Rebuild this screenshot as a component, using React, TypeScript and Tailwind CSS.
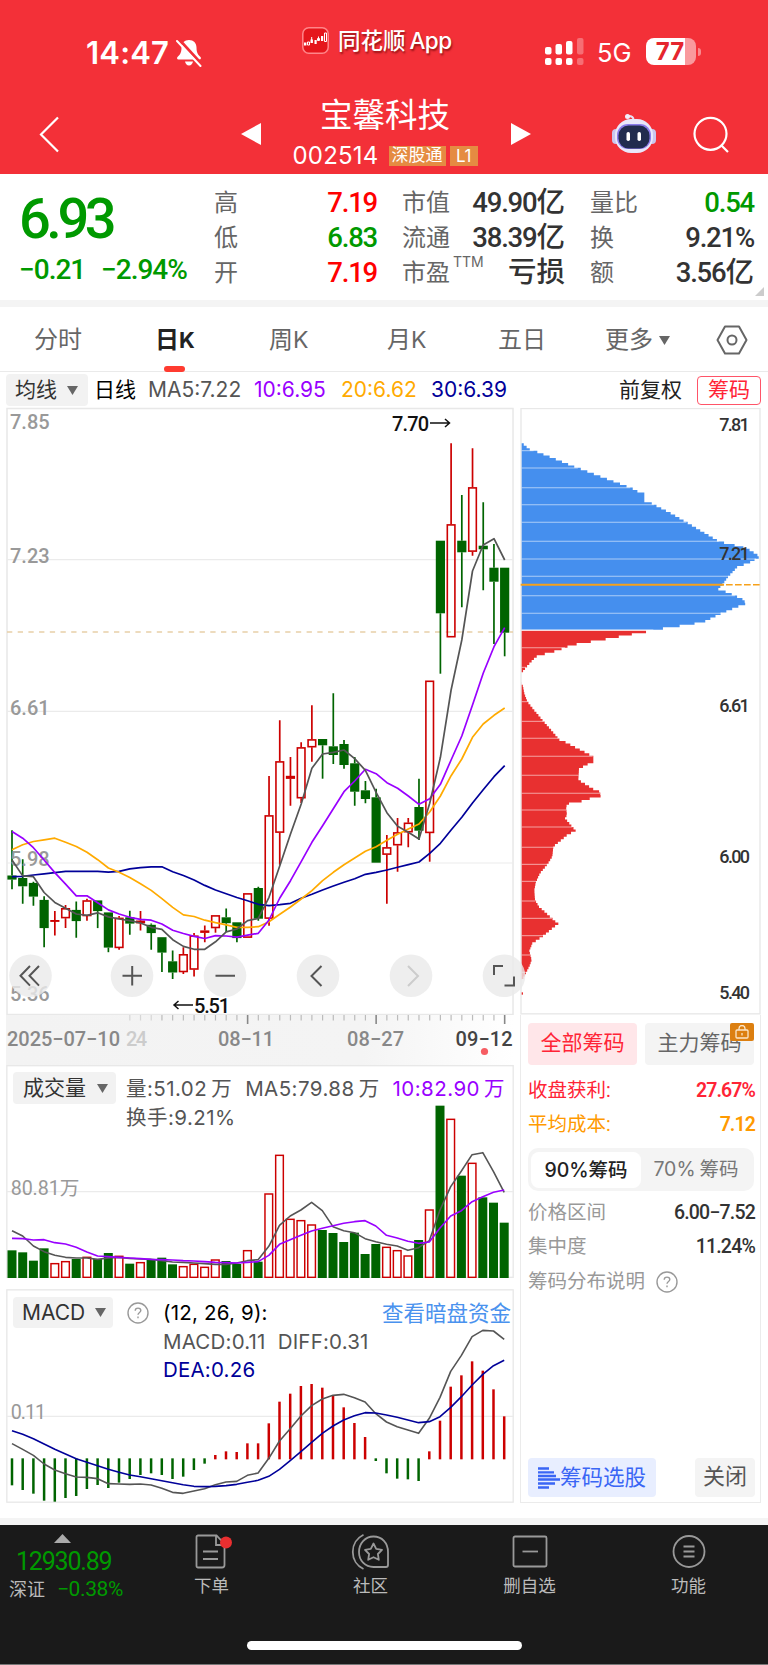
import React from "react";

const STEP = 10.71;
const GREEN = "#006400";
const RED = "#cc0000";

// [up, high, top, bottom, low]
const candles: [number, number, number, number, number][] = [
  [0, 830.3, 875.5, 879.6, 889.2], [0, 859.3, 878, 886.3, 903.7], [0, 881.7, 882.9, 896.6, 905.7],
  [0, 896.2, 899.9, 928.1, 947.2], [1, 911.1, 920.2, 921.1, 935.6], [1, 904.9, 908.2, 918.2, 928.1],
  [0, 901.6, 909.9, 921.1, 937.7], [1, 898.7, 900.4, 916.1, 920.7], [0, 900.4, 900.4, 911.1, 928.1],
  [0, 912.4, 912.4, 947.6, 952.2], [1, 916.1, 917.8, 948, 949.7], [0, 910.7, 917.3, 923.6, 934.8],
  [1, 911.1, 920.7, 923.2, 930.6], [0, 923.6, 924.8, 933.1, 949.7], [0, 937.2, 937.2, 952.6, 972.1],
  [0, 950.5, 961.3, 972.5, 979.1], [1, 947.2, 954.2, 972.1, 974.1], [1, 933.1, 935.6, 969.6, 976.6],
  [1, 925.6, 930.6, 932.7, 942.2], [1, 915.3, 915.3, 928.1, 932.7], [0, 908.6, 917.3, 923.2, 931.9],
  [0, 922.3, 922.3, 938.1, 942.2], [1, 893.3, 893.3, 937.7, 937.7], [0, 886.7, 888, 918.7, 920.7],
  [1, 776, 815.3, 918.7, 925.7], [1, 720.3, 761.3, 832.7, 864.7], [1, 757, 776, 778.7, 805.7],
  [1, 742.3, 747.3, 798.3, 803], [1, 705.3, 739.3, 747.3, 761.7], [0, 739, 739, 745.3, 778.7],
  [0, 693.3, 746.3, 755, 764], [0, 740, 744, 765, 768.7], [0, 757, 763.3, 791.7, 805.7],
  [0, 781, 790.3, 799, 803.3], [0, 788.7, 797.3, 862.7, 862.7], [1, 835, 847.3, 854.7, 903.7],
  [1, 818, 832.3, 845.3, 871.7], [1, 818, 822.7, 832.3, 847.3], [0, 778.7, 807, 830.7, 840],
  [1, 680.7, 680.7, 833, 861.7], [0, 540.7, 540.7, 613.3, 673.7], [1, 443.3, 524.3, 637.3, 637.3],
  [0, 495, 540.7, 552.3, 607.3], [1, 448.3, 487.3, 551.7, 555.7], [0, 502.3, 545.7, 549.3, 590.3],
  [0, 544, 567.7, 581.7, 644], [0, 567.7, 567.7, 632.7, 656.3],
];

const ma5 = [860, 875.9, 876.7, 892.5, 902.4, 908.2, 914, 915.3, 912.8, 916.9, 919, 920.7, 923, 927.3, 929.4, 939.7, 946.4, 949.3, 949.3, 941.8, 931.9, 929, 920.7, 918.3, 897.3, 865.7, 834, 804, 768.3, 754, 752.3, 750, 758.7, 770.3, 792.3, 812.7, 826.3, 832.3, 839, 803.3, 757.3, 690, 640, 571, 545, 538.7, 560];
const ma10 = [831.5, 838.2, 847.7, 860, 872.6, 884.2, 895.8, 895.8, 902.8, 909.9, 914, 917.3, 919.4, 920.2, 924, 930.2, 933.5, 936.4, 938.5, 935.6, 936, 937.2, 935.2, 933.3, 920, 898, 880.7, 861.7, 842.3, 825.7, 808.7, 791.7, 781, 769.3, 773.7, 782.7, 788.3, 796, 804.3, 798.7, 784.3, 760, 736, 705, 673.3, 646.7, 627.7];
const ma20 = [849.8, 844.8, 841.5, 839.8, 838.2, 842.3, 846.5, 852.3, 859.7, 868, 872.2, 877.6, 883.8, 890.4, 898.7, 907.4, 914.9, 916.5, 920.2, 922.7, 924.8, 927.3, 927.3, 926.7, 921.7, 914.3, 907, 899, 890.7, 880.7, 872.3, 864.7, 858, 851.3, 846.7, 840.3, 834.3, 829, 824, 812, 796, 775.7, 759, 737.3, 724, 715.3, 708];
const ma30 = [876.7, 876.3, 875, 873.8, 872.6, 871.3, 871.3, 871.3, 871.3, 872.2, 871.3, 868.8, 867.6, 866.8, 866.8, 871.7, 875.5, 880, 885.4, 890, 893.7, 897.5, 900.8, 904.3, 905.7, 904.7, 903.3, 898.3, 894.3, 890, 886, 882.3, 878.7, 874.3, 872.3, 870, 867.3, 864.7, 862, 853.3, 843.3, 830, 817.3, 803, 789.7, 776.7, 765.7];

const volumes = [751, 757, 782, 745, 790, 784, 777, 771, 777, 759, 768, 791, 787, 779, 773, 793, 799, 792, 801, 779, 783, 792, 751, 785, 581, 465, 657, 661, 674, 690, 699, 726, 698, 762, 732, 741, 751, 767, 720, 629, 317, 357, 527, 489, 592, 608, 668];
const vol5 = [692, 708, 738, 755, 766, 772, 774, 774, 778, 774, 772, 775, 777, 778, 782, 786, 787, 789, 791, 793, 793, 789, 782, 779, 739, 676, 648, 630, 607, 632, 680, 692, 698, 716, 725, 733, 738, 751, 743, 722, 630, 560, 513, 464, 458, 515, 577];
const vol10 = [715, 716, 720, 719, 728, 732, 742, 756, 768, 770, 772, 774, 776, 778, 779, 780, 782, 783, 785, 787, 788, 789, 787, 785, 766, 733, 719, 706, 693, 685, 677, 670, 665, 662, 678, 706, 714, 724, 730, 726, 684, 648, 632, 605, 590, 577, 570];

const macd = [616, 630, 641, 662, 665, 654, 648, 627, 615, 624, 608, 597, 585, 580, 585, 597, 590, 570, 551, 525, 514, 516, 490, 490, 430, 365, 341, 318, 312, 323, 348, 382, 429, 471, 543, 580, 596, 598, 603, 514, 422, 320, 286, 244, 272, 328, 409];
const diff = [491, 508, 526, 552, 570, 581, 591, 592, 596, 611, 612, 613, 612, 615, 625, 637, 640, 633, 626, 614, 606, 604, 586, 579, 535, 483, 446, 408, 377, 357, 346, 343, 353, 366, 401, 426, 440, 450, 460, 415, 352, 274, 226, 170, 151, 153, 178];
const dea = [452, 463, 476, 492, 508, 522, 536, 547, 557, 568, 577, 585, 590, 596, 602, 608, 614, 619, 620, 619, 617, 613, 607, 601, 589, 568, 542, 515, 487, 460, 438, 420, 407, 398, 399, 405, 412, 420, 428, 425, 410, 382, 350, 315, 283, 257, 241];

// chip distribution outline: [y, x]
const chips: [number, number][] = [
  [130, 37], [148, 58], [155, 80], [200, 193], [265, 366], [275, 385], [280, 403], [303, 403], [306, 417], [345, 492],
  [425, 628], [432, 660], [440, 692], [448, 715], [455, 727], [470, 750], [480, 733], [490, 715], [500, 683],
  [530, 655], [550, 640], [568, 625], [578, 655], [600, 703], [614, 706], [620, 683], [640, 635], [664, 585],
  [674, 540], [680, 497], [690, 430], [696, 407], [704, 360], [712, 318], [720, 275], [726, 237], [733, 197],
  [740, 172], [750, 148], [757, 125], [763, 100], [770, 78], [800, 50], [815, 38], [819, 35], [850, 35],
  [855, 38], [880, 43], [905, 52], [930, 72], [960, 97], [1015, 145], [1022, 150], [1027, 167], [1070, 250],
  [1088, 250], [1092, 235], [1100, 220], [1107, 207], [1140, 205], [1170, 255], [1175, 270], [1190, 272],
  [1195, 243], [1205, 210], [1210, 178], [1220, 168], [1245, 171], [1255, 165], [1292, 197], [1305, 172],
  [1340, 130], [1370, 127], [1392, 113], [1420, 90], [1445, 78], [1470, 73], [1500, 75], [1520, 87],
  [1568, 140], [1573, 147], [1580, 133], [1610, 97], [1630, 67], [1653, 58], [1680, 65], [1695, 60], [1738, 38], [1742, 35],
];
const chipLines = [152, 204, 263, 314, 367, 424, 477, 529, 587, 640, 690, 743, 802, 905, 964, 1015, 1069, 1126, 1180, 1230, 1281, 1342, 1393, 1444, 1503, 1555, 1607, 1665, 1717];

const chipAt = (y: number) => {
  const k = chips.findIndex((c) => c[0] >= y);
  if (k < 0) return 35;
  if (k === 0) return 37;
  const [y0, x0] = chips[k - 1];
  const [y1, x1] = chips[k];
  return x0 + ((x1 - x0) * (y - y0)) / (y1 - y0);
};

// stepped silhouette of the rows between two heights
const chipArea = (from: number, to: number) => {
  let d = `M35 ${from}`;
  for (let y = from; y < to; y += 7.36) {
    d += `H${chipAt(y + 3.7).toFixed(1)}V${Math.min(y + 7.36, to).toFixed(1)}`;
  }
  return d + "H35z";
};

const line = (ys: number[], x0: number, dx: number) =>
  ys.map((y, i) => `${(x0 + dx * i).toFixed(1)},${y}`).join(" ");

const DIN = "Roboto, 'Noto Sans CJK SC', sans-serif";
const axisText = { fontFamily: DIN, fontWeight: 500, fill: "#999" };

const Caret = ({ className = "" }) => (
  <svg className={className} width="11" height="9" viewBox="0 0 11 9">
    <path d="M0 0h11L5.500 9z" fill="#666" />
  </svg>
);

const Help = () => (
  <svg width="22" height="22" viewBox="0 0 22 22" fill="none" stroke="#999" strokeWidth="1.4">
    <circle cx="11" cy="11" r="10" />
    <path d="M8.200 8.800c0-1.700 1.200-2.700 2.800-2.700s2.800 1 2.800 2.500c0 1.900-2.800 2-2.800 4.200" />
    <path d="M11 14.500v1.800" />
  </svg>
);

const StatusBar = () => (
  <div className="flex h-[80px] items-start pl-[86px] text-white">
    <div className="mt-[33px] w-[87px] font-[Inter] text-[31px] leading-[40px] font-semibold tracking-[0.2px]">14:47</div>
    <svg className="mt-[39px] ml-[2px]" width="28" height="28" viewBox="0 0 28 28">
      <path d="M14 1c4.500 0 7.500 3 7.500 7.500 0 6 2 7.500 4 9.500.8.900.6 2.500-1 2.500h-21c-1.600 0-1.800-1.600-1-2.500 2-2 4-3.500 4-9.500C6.500 4 9.500 1 14 1z" fill="#fff" />
      <path d="M10 22.500h8c-.4 2.300-1.800 4-4 4s-3.600-1.700-4-4z" fill="#fff" />
      <path d="M4.500 1l22 24" stroke="#f33038" strokeWidth="3" />
      <path d="M2 2l23.500 25" stroke="#fff" strokeWidth="2" strokeLinecap="round" />
    </svg>
    <svg className="mt-[27px] ml-[99px]" width="27" height="27" viewBox="0 0 27 27">
      <rect x=".8" y=".8" width="25.400" height="25.400" rx="6" fill="#e5161c" stroke="#ff8589" strokeWidth="1.500" />
      <g fill="#fff">
        <rect x="2" y="15.500" width="2.400" height="3" />
        <rect x="8.500" y="12.500" width="2.400" height="3.500" />
        <rect x="12.500" y="13" width="2.200" height="4" />
        <rect x="19" y="9" width="2.200" height="5" />
      </g>
      <path d="M5.500 15h2v3h-2zM9.700 10v6M15.500 11.500h2v2h-2zM22.500 6h2v8.500h-2zM16.500 9.500v4" stroke="#fff" fill="none" strokeWidth="1" />
    </svg>
    <div className="mt-[25px] ml-[9px] w-[207px] text-[22.500px] leading-[32px] font-medium whitespace-nowrap [text-shadow:1px_2px_2px_rgba(90,0,0,0.6)]">
      同花顺<span className="ml-[4px] font-[Inter] text-[22.500px] tracking-[-0.600px]">App</span>
    </div>
    <svg className="mt-[38px]" width="39" height="28" viewBox="0 0 39 28" fill="#fff">
      <rect x="0" y="9" width="6.500" height="7.500" rx="2" />
      <rect x="10.500" y="6" width="6.500" height="10.500" rx="2" />
      <rect x="21" y="3" width="6.500" height="13.500" rx="2" />
      <rect x="32" y="0" width="6.500" height="16.500" rx="2" opacity=".3" />
      <rect x="0" y="20" width="6.500" height="7" rx="2" />
      <rect x="10.500" y="20" width="6.500" height="7" rx="2" />
      <rect x="21" y="20" width="6.500" height="7" rx="2" />
      <rect x="32" y="20" width="6.500" height="7" rx="2" opacity=".3" />
    </svg>
    <div className="mt-[37px] ml-[13px] w-[49px] font-[Inter] text-[25.500px] leading-[32px]">5G</div>
    <div className="mt-[38px] h-[27px] w-[50px] rounded-[8px] bg-[linear-gradient(90deg,#fff_77%,#f9999d_77%)] pr-[2px] text-center font-[Inter] text-[24px] leading-[27px] font-bold text-[#e5252d]">
      77
    </div>
    <div className="mt-[48px] ml-[2px] h-[8px] w-[3px] rounded-r-full bg-[#f9898e]" />
  </div>
);

const TitleBar = () => (
  <div className="flex h-[94px] items-start text-white">
    <svg className="mt-[36px] ml-[39px]" width="21" height="37" viewBox="0 0 21 37" fill="none" stroke="#fff" strokeWidth="2.200">
      <path d="M19 1.500L2 18.500l17 17" />
    </svg>
    <svg className="mt-[43px] ml-[181px]" width="20" height="22" viewBox="0 0 20 22"><path d="M20 0v22L0 11z" fill="#fff" /></svg>
    <div className="ml-[20px] flex w-[208px] flex-col items-center">
      <div className="mt-[16px] text-[32.500px] leading-[40px]">宝馨科技</div>
      <div className="mt-[9px] flex h-[21px] items-center">
        <span className="w-[96px] font-[Inter] text-[24px] leading-[20px] tracking-[0.200px]">002514</span>
        <span className="h-[20px] w-[57px] bg-[#e58b42] text-center text-[17px] leading-[19px]">深股通</span>
        <span className="ml-[4px] h-[20px] w-[28px] bg-[#e58b42] text-center font-[Inter] text-[17px] leading-[20px] tracking-[-0.5px]">L1</span>
      </div>
    </div>
    <svg className="mt-[43px] ml-[22px]" width="20" height="22" viewBox="0 0 20 22"><path d="M0 0v22l20-11z" fill="#fff" /></svg>
    <svg className="mt-[33px] ml-[81px]" width="44" height="41" viewBox="0 0 44 41">
      <path d="M21.500 7c0-3-1.500-4-5-4" stroke="#e6e2f5" strokeWidth="2" fill="none" />
      <circle cx="15.500" cy="3.500" r="2.500" fill="#f2effc" />
      <rect x="0" y="16" width="8" height="15" rx="4" fill="#c9c6ee" />
      <rect x="36" y="16" width="8" height="15" rx="4" fill="#c9c6ee" />
      <rect x="3" y="6" width="38" height="34" rx="16" fill="#e9e7fa" />
      <rect x="5" y="11" width="34" height="25" rx="11" fill="#8b7bea" />
      <rect x="6.500" y="12.500" width="31" height="23" rx="10" fill="#222c4e" />
      <rect x="14.500" y="19" width="3.500" height="9" rx="1.700" fill="#fff" />
      <rect x="25.500" y="19" width="3.500" height="9" rx="1.700" fill="#fff" />
    </svg>
    <svg className="mt-[36px] ml-[37px]" width="37" height="38" viewBox="0 0 37 38" fill="none" stroke="#fff" strokeWidth="2.200">
      <circle cx="17.500" cy="17.800" r="16" />
      <path d="M28 29l7 7" />
    </svg>
  </div>
);

const Stat = ({ label, sup = "", value, unit = "", color = "text-[#333]" }) => (
  <div className="flex h-[35.200px] items-center justify-between">
    <span className="relative text-[24px] text-[#666]">
      {label}
      {sup && <span className="absolute -top-[3px] left-full ml-[3px] text-[14px] leading-[20px] font-[Inter]">{sup}</span>}
    </span>
    <span className={`text-[27.500px] leading-[34px] font-medium tracking-[-1.200px] ${color}`}>
      {value}
      {unit && <span className="text-[28.500px] tracking-normal">{unit}</span>}
    </span>
  </div>
);

const Quote = () => (
  <div className="relative flex h-[126px] pt-[11px]">
    <div className="w-[195px] pl-[19px] text-[#090]">
      <div className="mt-[6px] h-[56px] text-[56px] leading-[56px] font-medium tracking-[-4.500px]">6.93</div>
      <div className="mt-[6px] flex text-[28px] leading-[34px] font-medium tracking-[-1px]">
        <span className="w-[82px]">−0.21</span>
        <span>−2.94%</span>
      </div>
    </div>
    <div className="ml-[19px] w-[163px]">
      <Stat label="高" value="7.19" color="text-[#f00]" />
      <Stat label="低" value="6.83" color="text-[#090]" />
      <Stat label="开" value="7.19" color="text-[#f00]" />
    </div>
    <div className="ml-[25px] w-[163px]">
      <Stat label="市值" value="49.90" unit="亿" />
      <Stat label="流通" value="38.39" unit="亿" />
      <Stat label="市盈" sup="TTM" value="" unit="亏损" />
    </div>
    <div className="ml-[25px] w-[164px]">
      <Stat label="量比" value="0.54" color="text-[#090]" />
      <Stat label="换" value="9.21%" />
      <Stat label="额" value="3.56" unit="亿" />
    </div>
    <svg className="absolute right-[4px] bottom-[4px]" width="9" height="9" viewBox="0 0 9 9"><path d="M9 0v9H0z" fill="#ccc" /></svg>
  </div>
);

const Tabs = () => (
  <div className="flex h-[65px] items-center border-b border-[#eaeaea] pt-[2px] text-[24px] text-[#666]">
    <span className="ml-[34px] w-[121px]">分时</span>
    <span className="relative w-[114px] font-bold text-[#222]">
      日<span className="font-[Inter] text-[22px]">K</span>
      <i className="absolute -bottom-[14px] left-[9px] h-[6px] w-[21px] rounded-[3px] bg-[#ff3b30]" />
    </span>
    <span className="w-[118px]">周<span className="font-[Inter] text-[23px]">K</span></span>
    <span className="w-[111px]">月<span className="font-[Inter] text-[23px]">K</span></span>
    <span className="w-[107px]">五日</span>
    <span>更多</span>
    <Caret className="ml-[6px]" />
    <svg className="ml-[46px]" width="32" height="30" viewBox="0 0 32 30" fill="none" stroke="#666" strokeWidth="2">
      <path d="M9 1.500h14L30.500 15 23 28.500H9L1.500 15z" strokeLinejoin="round" />
      <circle cx="16" cy="15" r="4.500" />
    </svg>
  </div>
);

const MaRow = () => (
  <div className="flex h-[36px] items-center pl-[6px] font-[Inter,'Noto_Sans_CJK_SC'] text-[21px] whitespace-nowrap">
    <span className="flex h-[32px] w-[82px] items-center rounded-[4px] bg-[#f2f2f2] pl-[9px] text-[#333]">
      均线<Caret className="ml-[10px]" />
    </span>
    <span className="ml-[6px] w-[54px] text-black">日线</span>
    <span className="w-[106px] text-[#555]">MA5:7.22</span>
    <span className="w-[87px] text-[#9900ff]">10:6.95</span>
    <span className="w-[90px] text-[#ffaa00]">20:6.62</span>
    <span className="w-[188px] text-[#000099]">30:6.39</span>
    <span className="w-[78px] text-[#222]">前复权</span>
    <span className="h-[29px] w-[64px] rounded-[4px] border-[1.500px] border-[#ff5468] text-center leading-[25px] text-[#ff2436]">筹码</span>
  </div>
);

const roundButtons = [30.5, 132, 225, 318, 411, 504];

const KChart = () => (
  <svg className="block overflow-visible" width="508" height="607" viewBox="6 408 508 607">
    <rect x="7" y="408.500" width="506" height="606" fill="#fff" stroke="#e8e8e8" strokeWidth="1.500" />
    {[559.6, 711.3, 863].map((y) => <path key={y} d={`M7 ${y}H513`} stroke="#ebebeb" strokeWidth="1.200" />)}
    <path d="M7 632H513" stroke="#e8cfa8" strokeWidth="1.400" strokeDasharray="5.300 5.400" />
    {candles.map(([up, h, t, b, l], i) => {
      const x = 12 + STEP * i;
      const c = up ? RED : GREEN;
      return (
        <g key={i} stroke={c}>
          <path d={`M${x} ${h}V${t}M${x} ${b}V${l}`} strokeWidth="1.700" />
          {up ? (
            <rect x={x - 3.8} y={t + 0.6} width="7.600" height={Math.max(b - t - 1.2, 0.3)} fill="none" strokeWidth="1.600" />
          ) : (
            <rect x={x - 4.6} y={t} width="9.200" height={b - t} fill={c} stroke="none" />
          )}
        </g>
      );
    })}
    <g fontSize="20" {...axisText}>
      <text x="10" y="429">7.85</text>
      <text x="10" y="562.500">7.23</text>
      <text x="10" y="714.500">6.61</text>
      <text x="10" y="866">5.98</text>
      <text x="10" y="1001">5.36</text>
    </g>
    <g fill="none" strokeWidth="1.700" strokeLinejoin="round">
      <polyline points={line(ma30, 12, STEP)} stroke="#000099" />
      <polyline points={line(ma20, 12, STEP)} stroke="#ffaa00" />
      <polyline points={line(ma10, 12, STEP)} stroke="#9900ff" />
      <polyline points={line(ma5, 12, STEP)} stroke="#555" />
    </g>
    <g fontFamily={DIN} fontWeight="500" fontSize="20" fill="#111">
      <text x="392" y="430.500" textLength="37">7.70</text>
      <text x="194" y="1012.500" textLength="36">5.51</text>
    </g>
    <g fill="none" stroke="#111" strokeWidth="1.500">
      <path d="M430 423h19.500M445 419l4.500 4-4.500 4M193 1005h-19M178.500 1001l-4.500 4 4.500 4" />
    </g>
    {roundButtons.map((x) => <circle key={x} cx={x} cy="975.800" r="21.300" fill="#eaeaea" fillOpacity=".8" />)}
    <g fill="none" stroke="#555" strokeWidth="2">
      <path d="M30 966l-9.500 9.800 9.500 9.800M39 966l-9.500 9.800 9.500 9.800" />
      <path d="M122.500 975.800h19.500M132.200 966v19.500M215.500 975.800H235" />
      <path d="M321.500 966l-10 10 10 10" />
      <path d="M408 966l10 10-10 10" stroke="#ccc" />
      <path d="M494 975v-9h9M504.500 985.500h9.500v-9" />
    </g>
  </svg>
);

const DateAxis = () => (
  <svg className="block" width="508" height="50" viewBox="6 1015 508 50">
    <defs>
      <linearGradient id="fade" x1="0" x2="1">
        <stop offset="0" stopColor="#f3f3f3" />
        <stop offset=".7" stopColor="#f4f4f4" />
        <stop offset="1" stopColor="#fff" />
      </linearGradient>
    </defs>
    <rect x="6" y="1015" width="508" height="50" fill="url(#fade)" />
    {candles.map((_, i) => {
      const x = 12 + STEP * i;
      const major = i === 22 || i === 34 || i === 46;
      if (i < 11) return null;
      return <path key={i} d={`M${x} 1015v${major ? 9 : 5.5}`} stroke={major ? "#888" : "#bbb"} strokeWidth={major ? 1.6 : 1.2} opacity={i < 14 ? 0.5 : 1} />;
    })}
    <g fontSize="20" {...axisText} fill="#888">
      <text x="7" y="1046" textLength="113">2025−07−10</text>
      <text x="126" y="1046" textLength="21" fill="#ccc">24</text>
      <text x="218" y="1046" textLength="56">08−11</text>
      <text x="347" y="1046" textLength="57">08−27</text>
      <text x="455.500" y="1046" textLength="57" fill="#444">09−12</text>
    </g>
    <circle cx="484.500" cy="1051.500" r="3.600" fill="#f65d63" />
  </svg>
);

const VolumeChart = () => (
  <div className="relative h-[213px] w-[508px]">
    <svg className="block" width="508" height="213" viewBox="18 195 1524 639">
      <rect x="20.500" y="197" width="1519" height="635" fill="#fff" stroke="#e8e8e8" strokeWidth="4" />
      <path d="M20 575H1540" stroke="#ebebeb" strokeWidth="3.500" />
      {volumes.map((y, i) => {
        const x = 36 + 32.1 * i;
        return candles[i][0] ? (
          <rect key={i} x={x - 11.500} y={y + 1} width="23" height={831 - y} fill="#fff" stroke={RED} strokeWidth="4.400" />
        ) : (
          <rect key={i} x={x - 13.500} y={y} width="27" height={834 - y} fill={GREEN} />
        );
      })}
      <g fill="none" strokeWidth="4.800" strokeLinejoin="round">
        <polyline points={line(vol5, 36, 32.1)} stroke="#555" />
        <polyline points={line(vol10, 36, 32.1)} stroke="#9900ff" />
      </g>
      <text x="32" y="584" fontSize="59" textLength="206" {...axisText} fontWeight="400">80.81万</text>
    </svg>
    <div className="absolute top-[7px] left-[7px] flex font-[Inter,'Noto_Sans_CJK_SC'] text-[21px] whitespace-nowrap text-[#555]">
      <span className="flex h-[32px] w-[103px] items-center rounded-[4px] bg-[#f2f2f2] pl-[10px] text-[#333]">
        成交量<Caret className="ml-[11px]" />
      </span>
      <div className="ml-[10px] text-[20.500px] leading-[28.500px] tracking-[0.450px]">
        <div className="mt-[3px] flex gap-[13px]">
          <span>量:51.02<span className="ml-[4px]">万</span></span>
          <span>MA5:79.88<span className="ml-[4px]">万</span></span>
          <span className="text-[#9900ff]">10:82.90<span className="ml-[4px]">万</span></span>
        </div>
        <div>换手:9.21%</div>
      </div>
    </div>
  </div>
);

const MacdChart = () => (
  <div className="relative h-[214px] w-[508px]">
    <svg className="block" width="508" height="214" viewBox="18 27 1524 642">
      <rect x="20.500" y="29.500" width="1519" height="637" fill="#fff" stroke="#e8e8e8" strokeWidth="4" />
      <path d="M20 409H1540" stroke="#ebebeb" strokeWidth="3.500" />
      {macd.map((y, i) => (
        <path key={i} d={`M${36 + 32.1 * i} ${y > 537 ? 535 : 538}V${y}`} stroke={y > 537 ? GREEN : RED} strokeWidth="7.500" />
      ))}
      <g fill="none" strokeWidth="4.800" strokeLinejoin="round">
        <polyline points={line(diff, 36, 32.1)} stroke="#555" />
        <polyline points={line(dea, 36, 32.1)} stroke="#000099" />
      </g>
      <text x="32" y="416" fontSize="59" textLength="106" {...axisText} fontWeight="400">0.11</text>
    </svg>
    <div className="absolute top-[8px] left-[7px] flex w-[500px] font-[Inter,'Noto_Sans_CJK_SC'] text-[20.500px] whitespace-nowrap text-[#555]">
      <span className="flex h-[31px] w-[100px] items-center rounded-[4px] bg-[#f2f2f2] pl-[9px] text-[21px] text-[#333]">
        MACD<Caret className="ml-[10px]" />
      </span>
      <span className="mt-[5px] ml-[14px]"><Help /></span>
      <div className="mt-[2px] ml-[14px] leading-[28.500px] tracking-[0.200px]">
        <div className="text-black">(12, 26, 9):</div>
        <div>MACD:0.11<span className="ml-[12px]">DIFF:0.31</span></div>
        <div className="text-[#000099]">DEA:0.26</div>
      </div>
      <span className="absolute top-0 right-[2px] text-[21.500px] text-[#4a92ee]">查看暗盘资金</span>
    </div>
  </div>
);

const ChipChart = () => (
  <svg className="relative block" width="241" height="607" viewBox="30 24 723 1821">
    <rect x="33" y="25.500" width="717" height="1816" fill="none" stroke="#e8e8e8" strokeWidth="4" />
    <path d={chipArea(130, 689)} fill="#458fee" />
    <path d={chipArea(692, 1738)} fill="#e83030" />
    <rect x="35" y="1777" width="4" height="7" fill="#e83030" />
    {chipLines.map((y) => <path key={y} d={`M35 ${y}H${chipAt(y)}`} stroke="#fff" strokeOpacity=".55" strokeWidth="3.200" />)}
    <path d="M32 554H642" stroke="#f7a11a" strokeWidth="6" />
    <path d="M648 554H750" stroke="#f7a11a" strokeWidth="4.500" strokeDasharray="20 7" />
    <g fontFamily={DIN} fontWeight="500" fontSize="54" fill="#333">
      <text x="628" y="94" textLength="91">7.81</text>
      <text x="628" y="480" textLength="91">7.21</text>
      <text x="628" y="935" textLength="91">6.61</text>
      <text x="628" y="1390" textLength="92">6.00</text>
      <text x="628" y="1797" textLength="92">5.40</text>
    </g>
  </svg>
);

const ChipInfo = () => (
  <div className="flex h-[488px] w-[241px] flex-col border-x-[1.500px] border-b-[1.500px] border-[#ebebeb] pt-[8px] pr-[5px] pb-[5px] pl-[7px] text-[19.500px]">
    <div className="flex gap-[8px] text-center text-[21px] leading-[40px]">
      <span className="h-[42px] w-[109px] rounded-[4px] bg-[#ffe6e9] text-[#ff2436]">全部筹码</span>
      <span className="relative h-[42px] w-[109px] rounded-[4px] bg-[#f4f4f4] text-[#666]">
        主力筹码
        <span className="absolute top-0 right-0 flex h-[18px] w-[24px] items-center justify-center rounded-[2px] bg-[#dc7f10]">
          <svg width="14" height="14" viewBox="0 0 14 14" fill="none" stroke="#fbe6c8" strokeWidth="1.300">
            <rect x="1" y="5" width="12" height="8" rx="1" />
            <path d="M4 5V3.500a3 3 0 016 0V5M7 8v2.500" />
          </svg>
        </span>
      </span>
    </div>
    <div className="mt-[9px] flex h-[34px] items-center justify-between text-[#ff2436]">
      <span>收盘获利:</span><span className="font-semibold tracking-[-0.900px]">27.67%</span>
    </div>
    <div className="flex h-[34px] items-center justify-between text-[#ff9a00]">
      <span>平均成本:</span><span className="font-semibold tracking-[-0.900px]">7.12</span>
    </div>
    <div className="mt-[6px] flex h-[43px] w-[226px] items-center rounded-[10px] bg-[#f4f4f4] p-[3px] text-center font-[Inter,'Noto_Sans_CJK_SC']">
      <span className="h-[36px] w-[110px] rounded-[8px] bg-white leading-[36px] font-medium text-[#222]">90%筹码</span>
      <span className="flex-1 text-[#777]">70%<span className="ml-[4px]">筹码</span></span>
    </div>
    <div className="mt-[4px] flex h-[35px] items-center justify-between text-[#999]">
      <span>价格区间</span><span className="font-medium tracking-[-0.800px] text-[#333]">6.00−7.52</span>
    </div>
    <div className="flex h-[34px] items-center justify-between text-[#999]">
      <span>集中度</span><span className="font-medium tracking-[-0.800px] text-[#333]">11.24%</span>
    </div>
    <div className="flex h-[35px] items-center gap-[11px] text-[#999]">
      <span>筹码分布说明</span><Help />
    </div>
    <div className="mt-auto flex justify-between text-[21.500px] leading-[38px]">
      <span className="flex h-[39px] w-[128px] items-center rounded-[4px] bg-[#e8eeff] pl-[10px] text-[#3a66f5]">
        <svg width="22" height="22" viewBox="0 0 22 22" stroke="#3a66f5" strokeWidth="2.300">
          <path d="M0 1.500h11M0 5.300h16M0 9h18M0 12.500h22M0 16.500h17M0 20.500h11" />
        </svg>
        筹码选股
      </span>
      <span className="h-[39px] w-[60px] rounded-[4px] bg-[#f4f4f4] text-center text-[22px] text-[#555]">关闭</span>
    </div>
  </div>
);

const NavItem = ({ label, children }) => (
  <div className="flex w-[159px] flex-col items-center">
    <svg className="mt-[9px] overflow-visible" width="36" height="36" viewBox="0 0 36 36" fill="none" stroke="#999" strokeWidth="1.800">
      {children}
    </svg>
    <span className="mt-[3px] text-[17.500px] leading-[26px] text-[#bbb]">{label}</span>
  </div>
);

const BottomBar = () => (
  <div className="flex h-[140px] flex-col border-b border-[#777] bg-[#1a1a1a]">
    <div className="flex h-[116px]">
      <div className="w-[132px]">
        <svg className="mt-[9px] ml-[54px]" width="17" height="9" viewBox="0 0 17 9"><path d="M8.500 0L17 9H0z" fill="#aaa" /></svg>
        <div className="mt-[5px] pl-[16px] text-[25px] leading-[27px] tracking-[-1.200px] text-[#090]">12930.89</div>
        <div className="mt-[2px] flex items-baseline pl-[9px] leading-[24px]">
          <span className="w-[48px] text-[18px] text-[#bbb]">深证</span>
          <span className="text-[21px] tracking-[-0.400px] text-[#090]">−0.38%</span>
        </div>
      </div>
      <NavItem label="下单">
        <path d="M4 1.500h18.500l8 8.500v21a2.500 2.500 0 01-2.500 2.500H4A1.500 1.500 0 012.500 32V3A1.500 1.500 0 014 1.500zM22 2v9h8.500M9 17.500h15M9 25h15" />
        <circle cx="32" cy="8.500" r="6" fill="#ea2f30" stroke="none" />
      </NavItem>
      <NavItem label="社区">
        <path d="M20.500 2.500c8.500 0 14.500 6.500 14.500 15.500v13a2 2 0 01-2 2H20.500C12 33 6 26.500 6 18S12 2.500 20.500 2.500zM10.500.800A19 19 0 0010.500 35" />
        <path d="M20.500 9.500l2.700 5.300 5.800 1-4.100 4.200.9 5.800-5.300-2.600-5.300 2.600.9-5.800L12 15.800l5.800-1z" strokeLinejoin="round" />
      </NavItem>
      <NavItem label="删自选">
        <rect x="1.500" y="2.500" width="33" height="30" rx="1.500" />
        <path d="M10.500 17.500h15.500" />
      </NavItem>
      <NavItem label="功能">
        <circle cx="18" cy="17.500" r="15.500" />
        <path d="M12.500 12.500h11M12.500 17.500h11M12.500 22.500h11" />
      </NavItem>
    </div>
    <div className="mx-auto h-[9px] w-[275px] rounded-full bg-white" />
  </div>
);

export default function App() {
  return (
    <div className="w-[768px] overflow-hidden bg-white font-[Roboto,'Noto_Sans_CJK_SC',sans-serif]">
      <div className="bg-[#f33038]">
        <StatusBar />
        <TitleBar />
      </div>
      <Quote />
      <div className="h-[7px] bg-[#f4f4f4]" />
      <Tabs />
      <MaRow />
      <div className="flex h-[1110px] gap-[6px] pl-[6px]">
        <div className="relative z-10 w-[508px]">
          <KChart />
          <DateAxis />
          <VolumeChart />
          <div className="h-[11px]" />
          <MacdChart />
        </div>
        <div className="w-[241px]">
          <ChipChart />
          <ChipInfo />
        </div>
      </div>
      <div className="h-[7px] bg-[#f4f4f4]" />
      <BottomBar />
    </div>
  );
}
